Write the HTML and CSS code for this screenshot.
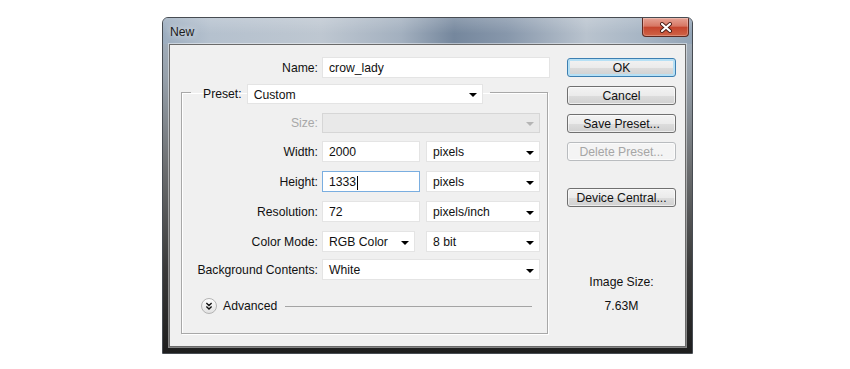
FILE: index.html
```html
<!DOCTYPE html>
<html>
  <head>
    <title>New</title>
    <meta charset="utf-8" />
    <link rel="stylesheet" href="styles.css">
  </head>
  <body>
    <div class="dialog">
      <div class="title-bar">
        <span class="title">New</span>
        <div class="close-button">
          <svg width="14" height="11" viewBox="0 0 14 11">
            <path d="M3 2 L11 9 M11 2 L3 9" stroke="#4a1d16" stroke-width="4" stroke-linecap="round" fill="none" />
            <path d="M3 2 L11 9 M11 2 L3 9" stroke="#fff" stroke-width="2.2" stroke-linecap="round" fill="none" />
          </svg>
        </div>
      </div>

      <div class="frame">
        <div class="client">
          <div class="form-area">
            <div class="name-row">
              <span class="field-label">Name:</span>
              <div class="field">crow_lady</div>
            </div>

            <fieldset class="preset-box">
              <legend class="preset-legend">
                <span>Preset:</span>
                <div class="field select preset-select">Custom</div>
              </legend>

              <div class="fields">
                <div class="row size-row">
                  <span class="field-label disabled">Size:</span>
                  <div class="field select disabled wide"></div>
                </div>

                <div class="row">
                  <span class="field-label">Width:</span>
                  <div class="field number">2000</div>
                  <div class="field select unit">pixels</div>
                </div>

                <div class="row">
                  <span class="field-label">Height:</span>
                  <div class="field number focused">1333<span class="caret"></span></div>
                  <div class="field select unit">pixels</div>
                </div>

                <div class="row">
                  <span class="field-label">Resolution:</span>
                  <div class="field number">72</div>
                  <div class="field select unit">pixels/inch</div>
                </div>

                <div class="row">
                  <span class="field-label">Color Mode:</span>
                  <div class="field select mode">RGB Color</div>
                  <div class="field select unit">8 bit</div>
                </div>

                <div class="row background-row">
                  <span class="field-label">Background Contents:</span>
                  <div class="field select wide">White</div>
                </div>
              </div>

              <div class="advanced-row">
                <span class="advanced-toggle">
                  <svg width="16" height="16" viewBox="0 0 16 16">
                    <path d="M5 4.5 L8 7.5 L11 4.5 M5 8.5 L8 11.5 L11 8.5" stroke="#111" stroke-width="1.5" fill="none" />
                  </svg>
                </span>
                <span>Advanced</span>
                <span class="advanced-line"></span>
              </div>
            </fieldset>
          </div>

          <div class="button-column">
            <div class="button default">OK</div>
            <div class="button">Cancel</div>
            <div class="button">Save Preset...</div>
            <div class="button disabled">Delete Preset...</div>
            <div class="button device">Device Central...</div>

            <div class="image-size">
              <p>Image Size:</p>
              <p>7.63M</p>
            </div>
          </div>
        </div>
      </div>
    </div>
  </body>
</html>
```

FILE: styles.css
```css
* {
  box-sizing: border-box;
}

body {
  margin: 0;
  background: #fff;
  font-family: "Liberation Sans", Arial, sans-serif;
  font-size: 12.2px;
  line-height: 15px;
  color: #111;
}

p {
  margin: 0;
}

/* window chrome */

.dialog {
  width: 531px;
  height: 337px;
  margin: 17px 0 0 162px;
  display: flex;
  flex-direction: column;
  border: 1px solid #474c52;
  border-radius: 6px 6px 0 0;
  overflow: hidden;
  background: linear-gradient(to bottom, #a7b4c2 0, #96a0aa 60px, #6c6e70 150px, #3a3a3a 250px, #1e1e1e 100%);
}

.title-bar {
  height: 26px;
  flex: none;
  display: flex;
  justify-content: space-between;
  align-items: flex-start;
  padding: 0 3px 0 7px;
  background:
    linear-gradient(to bottom, rgba(255, 255, 255, 0.18), rgba(255, 255, 255, 0) 60%),
    linear-gradient(to right, #9cadbf 0, #b5c1ce 9%, #bec7d1 30%, #a3b0bf 45%, #75879d 55%, #8797ab 65%, #b9c3ce 80%, #a8b6c5 90%, #93a4b6 100%);
}

.title {
  margin-top: 7px;
  color: #1b1b1b;
  text-shadow: 0 0 6px rgba(255, 255, 255, 0.9);
}

.close-button {
  width: 47px;
  height: 19px;
  display: flex;
  align-items: center;
  justify-content: center;
  border: 1px solid #5e2a22;
  border-top: none;
  border-radius: 0 0 4px 4px;
  background: linear-gradient(to bottom, #e6a294 0, #d77764 45%, #c5452e 52%, #cf6448 100%);
  box-shadow: inset 0 0 0 1px rgba(255, 255, 255, 0.25);
}

.frame {
  flex: 1;
  padding: 0 6px 6px 6px;
  display: flex;
}

.client {
  flex: 1;
  display: flex;
  align-items: flex-start;
  border: 1px solid #6a6a6a;
  background: #f0f0f0;
  box-shadow: 0 0 0 1px rgba(255, 255, 255, 0.45);
}

/* form */

.form-area {
  width: 397px;
  padding-top: 12px;
}

.name-row {
  display: grid;
  grid-template-columns: 148px 228px;
  column-gap: 4px;
  height: 21px;
}

.field-label {
  text-align: right;
  align-self: center;
  white-space: nowrap;
  padding-top: 1px;
}

.field-label.disabled {
  color: #a8a8a8;
}

.field {
  height: 21px;
  display: flex;
  align-items: center;
  padding: 2px 6px 0 6px;
  background: #fff;
  border: 1px solid #e4e4e4;
}

.select::after {
  content: "";
  margin-left: auto;
  margin-right: -1px;
  border-left: 4px solid transparent;
  border-right: 4px solid transparent;
  border-top: 4px solid #000;
}

.select.disabled {
  background: #e9e9e9;
  border-color: #d6d6d6;
}

.select.disabled::after {
  border-top-color: #b5b5b5;
}

.preset-box {
  width: 367px;
  margin: 2px 0 0 11px;
  padding: 0 0 19px 0;
  border: 1px solid #a8a8a8;
  box-shadow: inset 1px 1px 0 #fff, 1px 1px 0 #fff;
}

.preset-legend {
  margin-left: 9px;
  padding: 4px 7px 0 12px;
  display: flex;
  align-items: center;
  gap: 5px;
}

.preset-select {
  width: 236px;
  height: 20px;
}

.fields {
  padding: 9px 6px 0 0;
  display: flex;
  flex-direction: column;
  gap: 9px;
}

.row {
  display: flex;
  height: 21px;
}

.row .field-label {
  width: 136px;
  margin-right: 4px;
}

.size-row {
  height: 20px;
  margin-bottom: -1px;
}

.size-row .field {
  height: 20px;
}

.background-row {
  margin-top: -2px;
}

.wide {
  width: 218px;
}

.number {
  width: 98px;
  margin-right: 6px;
}

.mode {
  width: 93px;
  margin-right: 11px;
}

.unit {
  width: 114px;
}

.focused {
  border-color: #7aaee0;
}

.caret {
  width: 1px;
  height: 14px;
  background: #000;
  margin-left: 1px;
}

.advanced-row {
  display: flex;
  align-items: center;
  height: 16px;
  margin-top: 18px;
  padding: 0 15px 0 19px;
  gap: 6px;
}

.advanced-toggle {
  width: 16px;
  height: 16px;
  border-radius: 50%;
  border: 1px solid #b4b4b4;
  background: linear-gradient(to bottom, #fdfdfd, #e2e2e2);
  display: flex;
  align-items: center;
  justify-content: center;
}

.advanced-line {
  flex: 1;
  height: 1px;
  margin-left: 2px;
  background: #a4a4a4;
}

/* buttons */

.button-column {
  width: 109px;
  margin: 13px 0 0 0;
  display: flex;
  flex-direction: column;
  gap: 9px;
}

.button {
  height: 19px;
  display: flex;
  align-items: center;
  justify-content: center;
  padding-top: 1px;
  border: 1px solid #707070;
  border-radius: 3px;
  background: linear-gradient(to bottom, #f3f3f3 0, #ebebeb 50%, #dddddd 51%, #d0d0d0 100%);
  box-shadow: inset 0 0 0 1px rgba(255, 255, 255, 0.6);
}

.button.default {
  border-color: #3c7fb1;
  box-shadow: inset 0 0 0 2px #b6e0f5;
}

.button.disabled {
  color: #a6a6a6;
  border-color: #b9bcbf;
  background: #f4f4f4;
}

.button.device {
  margin-top: 18px;
}

.image-size {
  margin-top: 59px;
  text-align: center;
  display: flex;
  flex-direction: column;
  gap: 9px;
}
```
